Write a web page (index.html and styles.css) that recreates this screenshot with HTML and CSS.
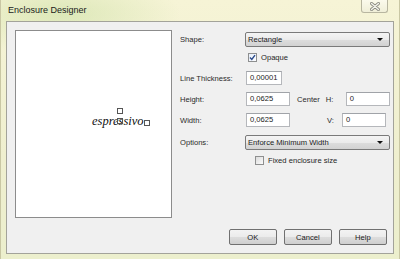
FILE: index.html
```html
<!DOCTYPE html>
<html lang="en">
<head>
    <meta charset="UTF-8">
    <title>Enclosure Designer</title>
    <link rel="stylesheet" href="styles.css">
</head>
<body>
    <div class="window">
        <div class="titlebar">
            <span class="title">Enclosure Designer</span>
            <div class="close-btn">
                <svg width="10" height="9" viewBox="0 0 10 9">
                    <path d="M1.5 1.5 L8.5 7.5 M8.5 1.5 L1.5 7.5" stroke="#8a8a80" stroke-width="3" stroke-linecap="round"/>
                    <path d="M1.5 1.5 L8.5 7.5 M8.5 1.5 L1.5 7.5" stroke="#f4f4ec" stroke-width="1.4" stroke-linecap="round"/>
                </svg>
            </div>
        </div>
        <div class="client">
            <div class="preview">
                <span class="handle h-top"></span>
                <span class="mark">espressivo</span>
                <span class="handle h-mid"></span>
                <span class="handle h-end"></span>
            </div>
            <div class="panel">
                <div class="row row-shape">
                    <label class="lbl">Shape:</label>
                    <div class="select"><span>Rectangle</span><span class="arrow"></span></div>
                </div>
                <div class="row row-check">
                    <span class="lbl"></span>
                    <span class="check checked">
                        <svg width="7" height="7" viewBox="0 0 7 7"><path d="M1 3.6 L2.8 5.4 L6 1.2" fill="none" stroke="#2a4a8a" stroke-width="1.4"/></svg>
                    </span>
                    <span class="check-text">Opaque</span>
                </div>
                <div class="row">
                    <label class="lbl">Line Thickness:</label>
                    <div class="field f-short">0,00001</div>
                </div>
                <div class="row">
                    <label class="lbl">Height:</label>
                    <div class="field f-mid">0,0625</div>
                    <span class="center-lbl">Center</span>
                    <span class="axis">H:</span>
                    <div class="field f-axis">0</div>
                </div>
                <div class="row row-width">
                    <label class="lbl">Width:</label>
                    <div class="field f-mid">0,0625</div>
                    <span class="axis axis-v">V:</span>
                    <div class="field f-axis">0</div>
                </div>
                <div class="row row-shape">
                    <label class="lbl">Options:</label>
                    <div class="select"><span>Enforce Minimum Width</span><span class="arrow"></span></div>
                </div>
                <div class="row row-check">
                    <span class="lbl"></span>
                    <span class="check check-fixed"></span>
                    <span class="check-text">Fixed enclosure size</span>
                </div>
                <div class="buttons">
                    <button type="button">OK</button>
                    <button type="button">Cancel</button>
                    <button type="button">Help</button>
                </div>
            </div>
        </div>
    </div>
</body>
</html>
```

FILE: styles.css
```css
body {
    margin: 0;
    padding: 0;
    font-family: 'Liberation Sans', Arial, sans-serif;
    background: #f2f1d4;
}

.window {
    width: 400px;
    height: 259px;
    box-sizing: border-box;
    display: flex;
    flex-direction: column;
    background:
        radial-gradient(ellipse 120px 40px at 60px 14px, rgba(200, 222, 160, 0.55), transparent),
        linear-gradient(180deg, #f6f4d6 0%, #efefcf 60%, #ecefcd 100%);
    border-left: 1px solid #c9c7a4;
    border-right: 1px solid #c9c7a4;
    padding: 0 5px 5px 5px;
}

.titlebar {
    height: 21px;
    display: flex;
    align-items: flex-start;
    justify-content: space-between;
}

.title {
    font-family: 'Liberation Sans', Arial, sans-serif;
    font-size: 9px;
    color: #1a1a1a;
    margin: 5px 0 0 2px;
}

.close-btn {
    width: 27px;
    height: 13px;
    margin-right: 6px;
    margin-left: auto;
    box-sizing: border-box;
    border: 1px solid #b8b6a0;
    border-top: none;
    border-radius: 0 0 3px 3px;
    background: linear-gradient(180deg, #fbfaec, #f0efd8);
    display: flex;
    align-items: center;
    justify-content: center;
}

.client {
    flex: 1;
    display: flex;
    background: #f0f0f0;
    border: 1px solid #a3a39a;
}

.preview {
    position: relative;
    width: 155px;
    height: 186px;
    margin: 8px 0 0 8px;
    background: #fff;
    border: 1px solid #8c8c8c;
    flex-shrink: 0;
}

.mark {
    position: absolute;
    left: 76px;
    top: 83px;
    font-family: 'Liberation Serif', 'Times New Roman', serif;
    font-style: italic;
    font-size: 12.5px;
    color: #111;
}

.handle {
    position: absolute;
    width: 4px;
    height: 4px;
    border: 1px solid #555;
    background: #fff;
}

.h-top { left: 101px; top: 77px; }
.h-mid { left: 101px; top: 87px; background: transparent; }
.h-end { left: 128px; top: 89px; }

.panel {
    flex: 1;
    display: flex;
    flex-direction: column;
    padding: 10px 6px 8px 8px;
    font-size: 7.6px;
    color: #2a2a2a;
}

.row {
    display: flex;
    align-items: center;
    height: 14px;
    margin-bottom: 7px;
}

.row-shape {
    height: 15px;
    margin-bottom: 6px;
}

.row-check {
    height: 9px;
    margin-bottom: 9px;
}

.row-width {
    margin-bottom: 8px;
}

.lbl {
    width: 65px;
    flex-shrink: 0;
}

.select {
    flex: 1;
    height: 15px;
    box-sizing: border-box;
    border: 1px solid #7a7a7a;
    border-radius: 2px;
    background: linear-gradient(180deg, #f4f4f4 0%, #ebebeb 50%, #dddddd 51%, #d2d2d2 100%);
    display: flex;
    align-items: center;
    justify-content: space-between;
    padding: 0 6px 0 2px;
    color: #1a1a1a;
}

.arrow {
    width: 0;
    height: 0;
    border-left: 3px solid transparent;
    border-right: 3px solid transparent;
    border-top: 3px solid #111;
}

.check {
    width: 9px;
    height: 9px;
    box-sizing: border-box;
    border: 1px solid #8e8f8f;
    background: linear-gradient(135deg, #dcdcdc, #fbfbfb);
    display: flex;
    align-items: center;
    justify-content: center;
    margin-left: 3px;
}

.check.checked {
    background: linear-gradient(135deg, #e6eef8, #fdfdff);
}

.check-fixed {
    margin-left: 10px;
}

.check-text {
    margin-left: 4px;
    color: #1f1f1f;
}

.field {
    height: 14px;
    box-sizing: border-box;
    border: 1px solid #b5b7bb;
    border-top-color: #a0a3a8;
    background: #fff;
    padding-left: 3px;
    line-height: 12px;
    color: #1a1a1a;
    margin-left: 1px;
}

.f-short { width: 36px; }
.f-mid { width: 44px; }
.f-axis { width: 44px; margin-left: 0; }

.center-lbl {
    margin-left: 7px;
}

.axis {
    margin-left: 6px;
    width: 20px;
}

.axis-v {
    margin-left: 37px;
    width: 15px;
}

.buttons {
    margin-top: auto;
    display: flex;
    justify-content: flex-end;
    gap: 7px;
    padding-right: 3px;
}

.buttons button {
    width: 48px;
    height: 16px;
    padding: 0;
    font-family: 'Liberation Sans', Arial, sans-serif;
    font-size: 7.6px;
    color: #1a1a1a;
    border: 1px solid #707070;
    border-radius: 2px;
    background: linear-gradient(180deg, #f3f3f3 0%, #ebebeb 50%, #dddddd 51%, #cfcfcf 100%);
}
```
